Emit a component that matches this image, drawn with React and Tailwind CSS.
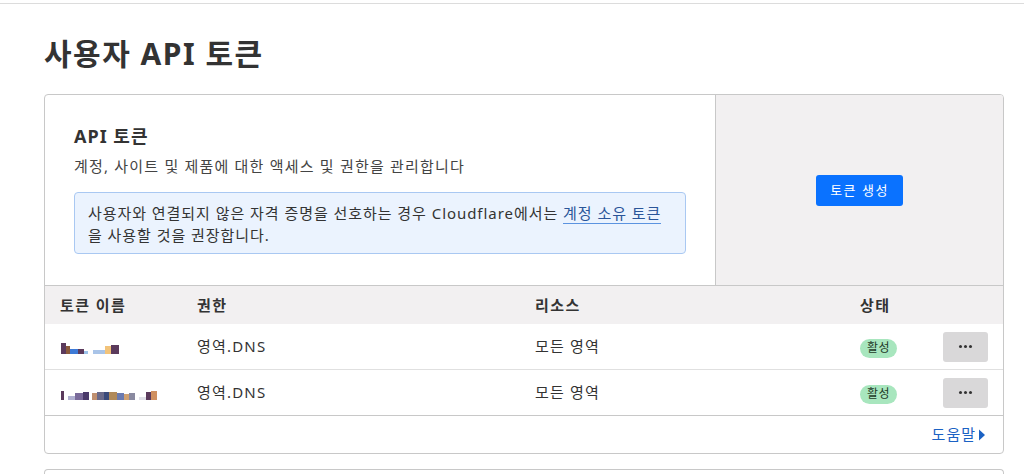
import React from "react";

const font = { fontFamily: '"Noto Sans", "Noto Sans CJK KR", sans-serif' };

const Blur = ({ blocks }) => (
  <div className="flex items-end h-[12px]">
    {blocks.map((b, i) => (
      <span key={i} className="inline-block" style={{ width: b[0], height: b[1], background: b[2] }} />
    ))}
  </div>
);

const rows = [
  {
    blocks: [
      [5, 11, "#5b3a5c"], [4, 8, "#8a5a3c"], [8, 5, "#3d7ad6"], [6, 5, "#5b3a5c"], [4, 3, "#9cc3ea"], [5, 2, "#ffffff"],
      [12, 4, "#a9c4e8"], [6, 8, "#f2c37a"], [8, 9, "#5b3a5c"],
    ],
  },
  {
    blocks: [
      [3, 9, "#5b3a5c"], [4, 2, "#ffffff"], [7, 4, "#b0b0d0"], [8, 7, "#7a6a9a"], [6, 8, "#4a3a6a"], [3, 2, "#ffffff"],
      [5, 7, "#c09070"], [7, 8, "#6a6a8a"], [5, 8, "#3a4a7a"], [8, 8, "#b08a5a"], [7, 7, "#6a7ab0"], [5, 6, "#cfa070"],
      [6, 7, "#8a8aa0"], [4, 2, "#ffffff"], [7, 3, "#e0e0e8"], [5, 8, "#5b3a5c"], [6, 9, "#d09060"],
    ],
  },
];

export default function App() {
  return (
    <div className="min-h-[474px] bg-white text-[#333]" style={font}>
      <div className="mt-[3px] border-t border-[#dcdcdc]" />
      <div className="ml-[44px] w-[960px] pt-[30px]">
        <h1 className="text-[30px] font-bold leading-[40px] text-[#333] tracking-[1.5px]">사용자 API 토큰</h1>

        <div className="mt-[20px] border border-[#c8c8c8] rounded-[4px] overflow-hidden">
          <div className="flex h-[191px] border-b border-[#c8c8c8]">
            <div className="w-[671px] border-r border-[#c8c8c8] pl-[29px] pt-[28px]">
              <div className="text-[18px] font-bold leading-[26px] text-[#333] tracking-[1px]">API 토큰</div>
              <div className="mt-[7px] text-[15px] leading-[20px] text-[#444] tracking-[1.2px]">
                계정, 사이트 및 제품에 대한 액세스 및 권한을 관리합니다
              </div>
              <div className="mt-[16px] w-[612px] h-[62px] rounded-[4px] border border-[#a9c8f2] bg-[#ebf3fe] px-[13px] pt-[9px] text-[15px] leading-[22px] text-[#333] tracking-[0.95px]">
                사용자와 연결되지 않은 자격 증명을 선호하는 경우 Cloudflare에서는{" "}
                <span className="text-[#2a5599] border-b-[1.5px] border-[#5b93e0]">계정 소유 토큰</span>
                <br />을 사용할 것을 권장합니다.
              </div>
            </div>
            <div className="flex-1 bg-[#f2f0f1] flex items-center justify-center">
              <button className="h-[31px] w-[87px] rounded-[3px] bg-[#0a72ff] text-white text-[13px] leading-[31px] tracking-[1.5px]">
                토큰 생성
              </button>
            </div>
          </div>

          <div className="grid grid-cols-[137px_338px_325px_1fr_45px] px-[15px] h-[38px] items-center bg-[#f2f0f1] text-[15px] font-bold text-[#333] tracking-[1.4px]">
            <div>토큰 이름</div>
            <div>권한</div>
            <div>리소스</div>
            <div>상태</div>
            <div />
          </div>

          {rows.map((r, i) => (
            <div
              key={i}
              className={
                "grid grid-cols-[137px_338px_325px_1fr_45px] px-[15px] h-[46px] items-center text-[15px] text-[#333] tracking-[1.2px] border-b " +
                (i === rows.length - 1 ? "border-[#c8c8c8]" : "border-[#e0e0e0]")
              }
            >
              <div className="pl-[1px] pt-[2px]">
                <Blur blocks={r.blocks} />
              </div>
              <div>영역.DNS</div>
              <div>모든 영역</div>
              <div>
                <span className="inline-flex items-center h-[19px] px-[7px] rounded-full bg-[#a8e6be] text-[12px] text-[#1f3a28] tracking-[0.5px]">
                  활성
                </span>
              </div>
              <div className="flex justify-end">
                <button className="w-[45px] h-[30px] rounded-[3px] bg-[#d9d8d9] flex items-center justify-center gap-[2px]">
                  <span className="w-[3px] h-[3px] rounded-full bg-[#333]" />
                  <span className="w-[3px] h-[3px] rounded-full bg-[#333]" />
                  <span className="w-[3px] h-[3px] rounded-full bg-[#333]" />
                </button>
              </div>
            </div>
          ))}

          <div className="h-[37px] flex items-center justify-end pr-[17px]">
            <a className="flex items-center text-[15px] text-[#1b62c4] tracking-[1px]">
              도움말
              <svg width="8" height="12" viewBox="0 0 8 12" className="ml-[2px]">
                <path d="M1 0.5 L7 6 L1 11.5 Z" fill="#1b62c4" />
              </svg>
            </a>
          </div>
        </div>

        <div className="mt-[15px] h-[20px] border border-[#c8c8c8] border-b-0 rounded-t-[4px]" />
      </div>
    </div>
  );
}
